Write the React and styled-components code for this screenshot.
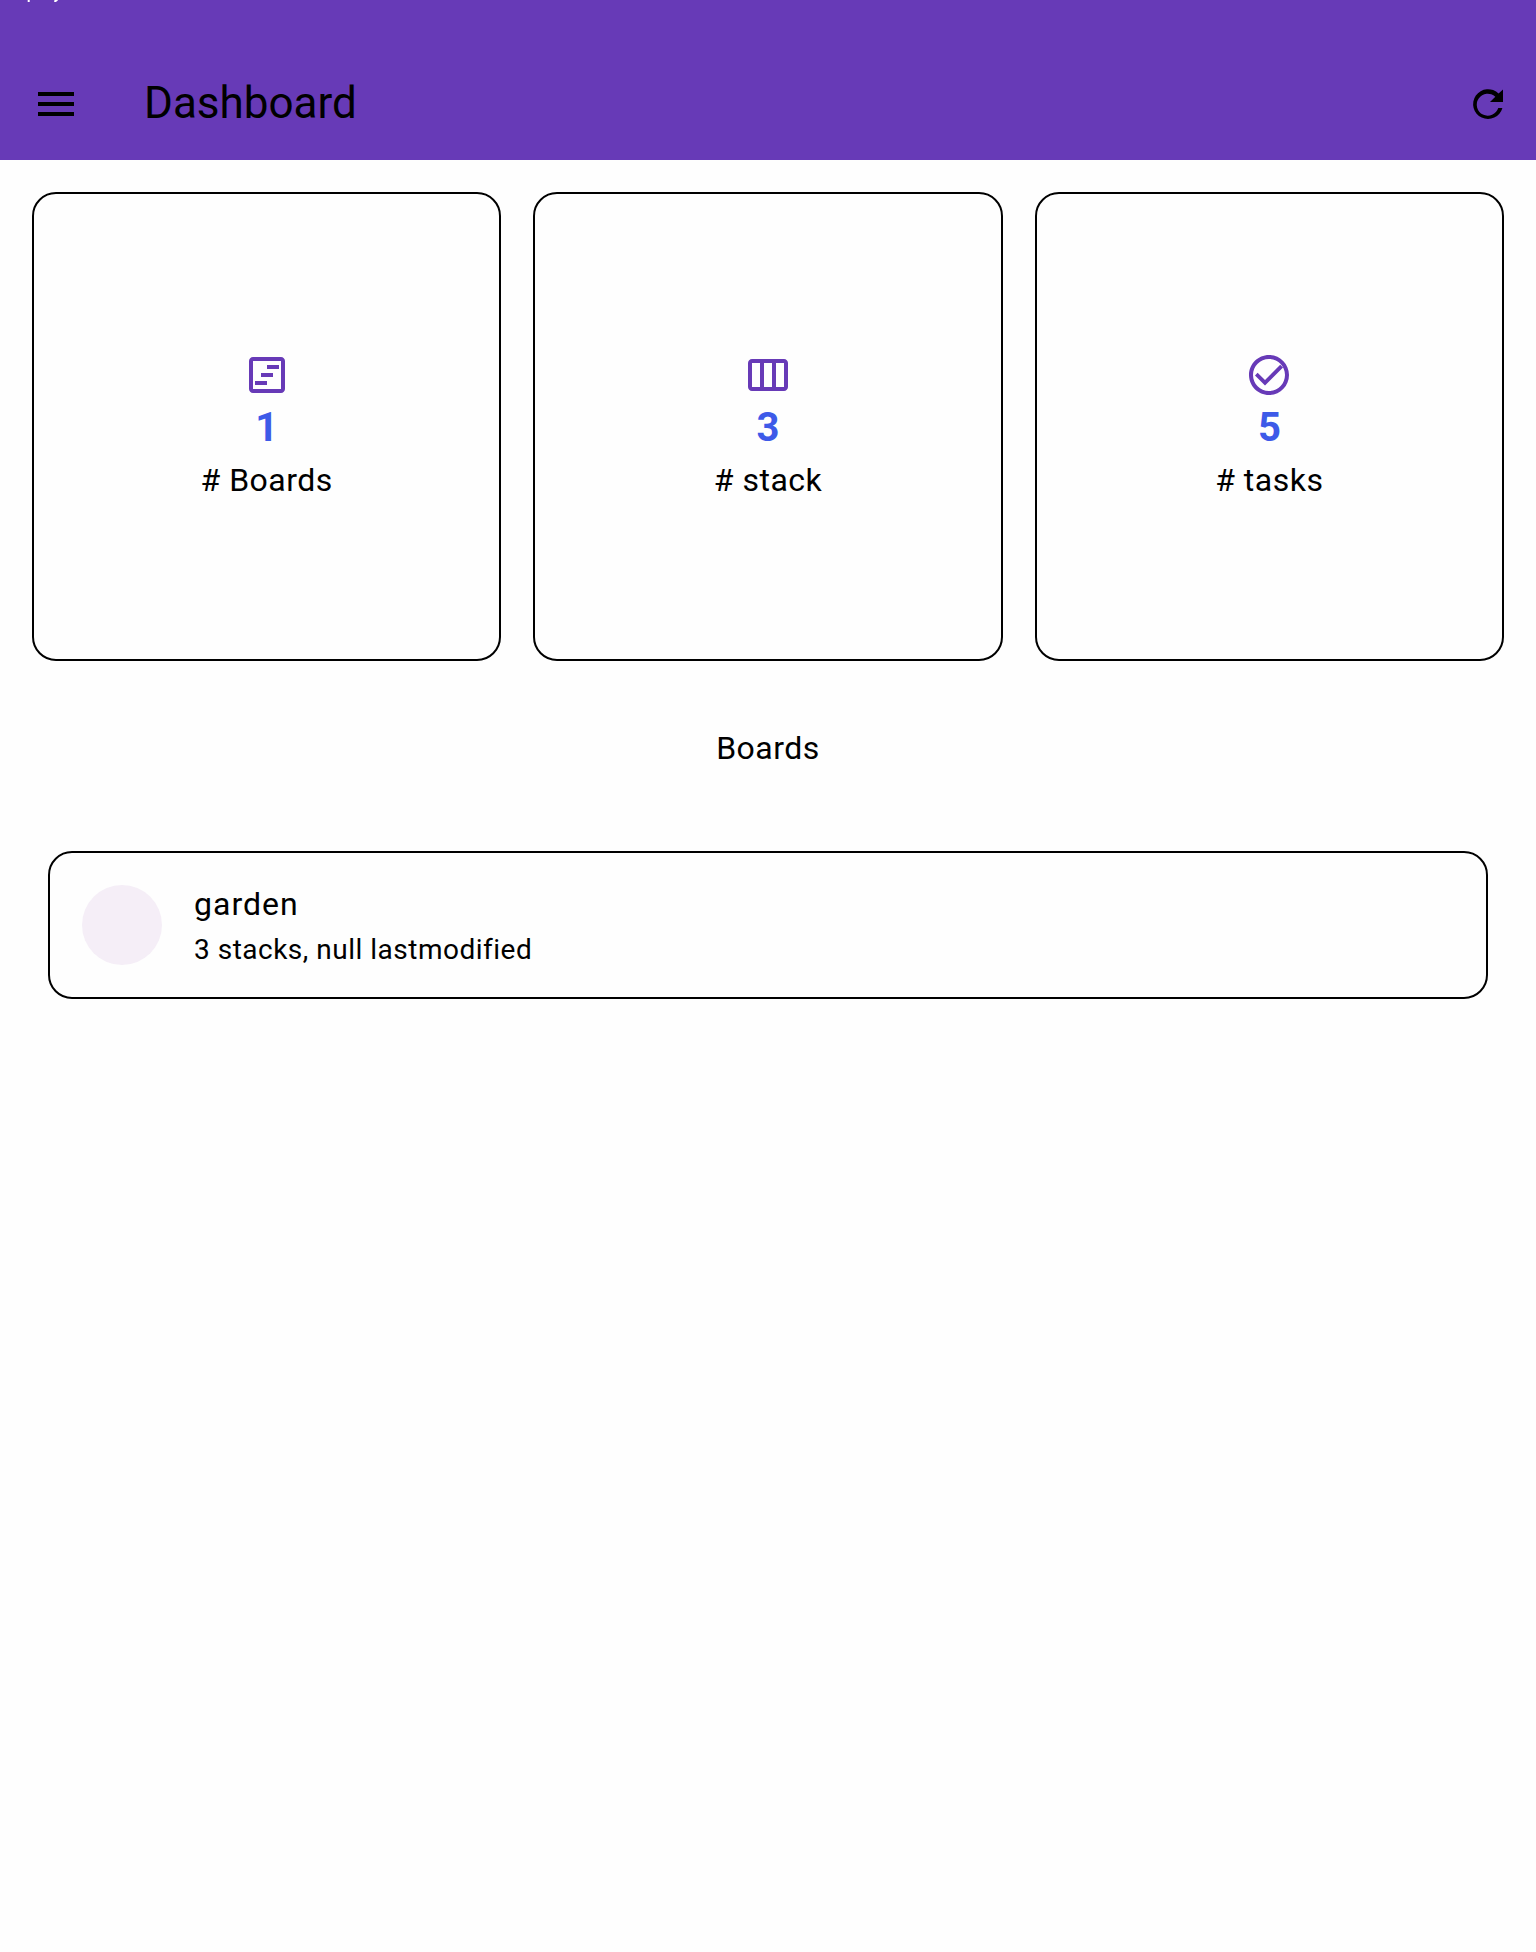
import React from 'react';
import styled, { createGlobalStyle } from 'styled-components';

const GlobalStyle = createGlobalStyle`
  *, *::before, *::after { box-sizing: border-box; }
  body { margin: 0; background: #fefefe; color: #000; font-family: Roboto, sans-serif; }
`;

const Page = styled.div`
  min-height: 1952px;
  display: flex;
  flex-direction: column;
`;

const AppBar = styled.header`
  background: #673ab7;
`;

const StatusBar = styled.div`
  height: 48px;
  padding-left: 27px;
  svg { display: block; }
`;

const Toolbar = styled.div`
  height: 112px;
  padding: 0 24px 0 32px;
  display: flex;
  align-items: center;
`;

const IconButton = styled.button`
  display: flex;
  padding: 0;
  border: 0;
  background: none;
  color: #000;
`;

const Title = styled.h1`
  flex: 1;
  margin: 0 0 2px 64px;
  font-size: 44px;
  line-height: 56px;
  font-weight: 400;
`;

const Stats = styled.section`
  display: grid;
  grid-template-columns: repeat(3, 1fr);
  gap: 32px;
  padding: 32px 32px 0;
`;

const StatCard = styled.article`
  aspect-ratio: 1;
  border: 2px solid #000;
  border-radius: 24px;
  display: flex;
  flex-direction: column;
  align-items: center;
  justify-content: center;
  color: #673ab7;
`;

const Count = styled.div`
  margin: 1px 0 -1px;
  font-size: 40px;
  line-height: 56px;
  font-weight: 700;
  color: #3d5ae8;
`;

const Label = styled.div`
  margin: 1px 0 -1px;
  font-size: 32px;
  line-height: 48px;
  letter-spacing: 0.5px;
  color: #000;
`;

const Heading = styled.h2`
  margin: 0;
  padding: 63px 0 79px;
  text-align: center;
  font-size: 32px;
  line-height: 48px;
  font-weight: 400;
  letter-spacing: 0.5px;
`;

const BoardTile = styled.article`
  height: 148px;
  margin: 0 48px;
  padding: 0 32px;
  border: 2px solid #000;
  border-radius: 24px;
  display: flex;
  align-items: center;
  gap: 32px;
`;

const Avatar = styled.div`
  width: 80px;
  height: 80px;
  border-radius: 50%;
  background: #f5eef7;
`;

const BoardName = styled.div`
  font-size: 32px;
  line-height: 48px;
  letter-spacing: 1px;
`;

const BoardInfo = styled.div`
  margin-top: 2px;
  font-size: 28px;
  line-height: 40px;
  letter-spacing: 0.5px;
`;

const Icon = ({ d }) => (
  <svg width="48" height="48" viewBox="0 0 24 24" fill="currentColor" fillRule="evenodd">
    <path d={d} />
  </svg>
);

const icons = {
  menu: 'M3 18h18v-2H3v2zm0-5h18v-2H3v2zm0-7v2h18V6H3z',
  refresh:
    'M19.5 4.8V11H13l2.65-2.65A5.5 5.5 0 1 0 17.12 14H19.2A7.45 7.45 0 1 1 17.3 6.8z',
  boards:
    'M19 3H5c-1.1 0-2 .9-2 2v14c0 1.1.9 2 2 2h14c1.1 0 2-.9 2-2V5c0-1.1-.9-2-2-2zM19 19H5V5h14zM12 7h6v2h-6zM9 11h6v2H9zM6 15h6v2H6z',
  stack:
    'M20 4H4c-1.1 0-2 .9-2 2v12c0 1.1.9 2 2 2h16c1.1 0 2-.9 2-2V6c0-1.1-.9-2-2-2zM8 18H4V6h4zM14 18H10V6H14zM20 18h-4V6H20z',
  tasks:
    'M17.6 6.9 10 14.5l-3.7-3.6L5 12.2l5 5 9-8.9zM12 2C6.48 2 2 6.48 2 12s4.48 10 10 10 10-4.48 10-10S17.52 2 12 2zm0 18c-4.42 0-8-3.58-8-8s3.58-8 8-8 8 3.58 8 8-3.58 8-8 8z',
};

const stats = [
  { icon: 'boards', count: 1, label: '# Boards' },
  { icon: 'stack', count: 3, label: '# stack' },
  { icon: 'tasks', count: 5, label: '# tasks' },
];

export default function App() {
  return (
    <Page>
      <GlobalStyle />
      <AppBar>
        <StatusBar>
          <svg width="32" height="2" viewBox="0 0 32 2" fill="#fff">
            <path d="M.7 0h2v2h-2zM27.5 0h3.6L30 1.2 28.8 2h-1.6V1z" />
          </svg>
        </StatusBar>
        <Toolbar>
          <IconButton aria-label="Menu"><Icon d={icons.menu} /></IconButton>
          <Title>Dashboard</Title>
          <IconButton aria-label="Refresh"><Icon d={icons.refresh} /></IconButton>
        </Toolbar>
      </AppBar>
      <Stats>
        {stats.map((s) => (
          <StatCard key={s.icon}>
            <Icon d={icons[s.icon]} />
            <Count>{s.count}</Count>
            <Label>{s.label}</Label>
          </StatCard>
        ))}
      </Stats>
      <Heading>Boards</Heading>
      <BoardTile>
        <Avatar />
        <div>
          <BoardName>garden</BoardName>
          <BoardInfo>3 stacks, null lastmodified</BoardInfo>
        </div>
      </BoardTile>
    </Page>
  );
}
